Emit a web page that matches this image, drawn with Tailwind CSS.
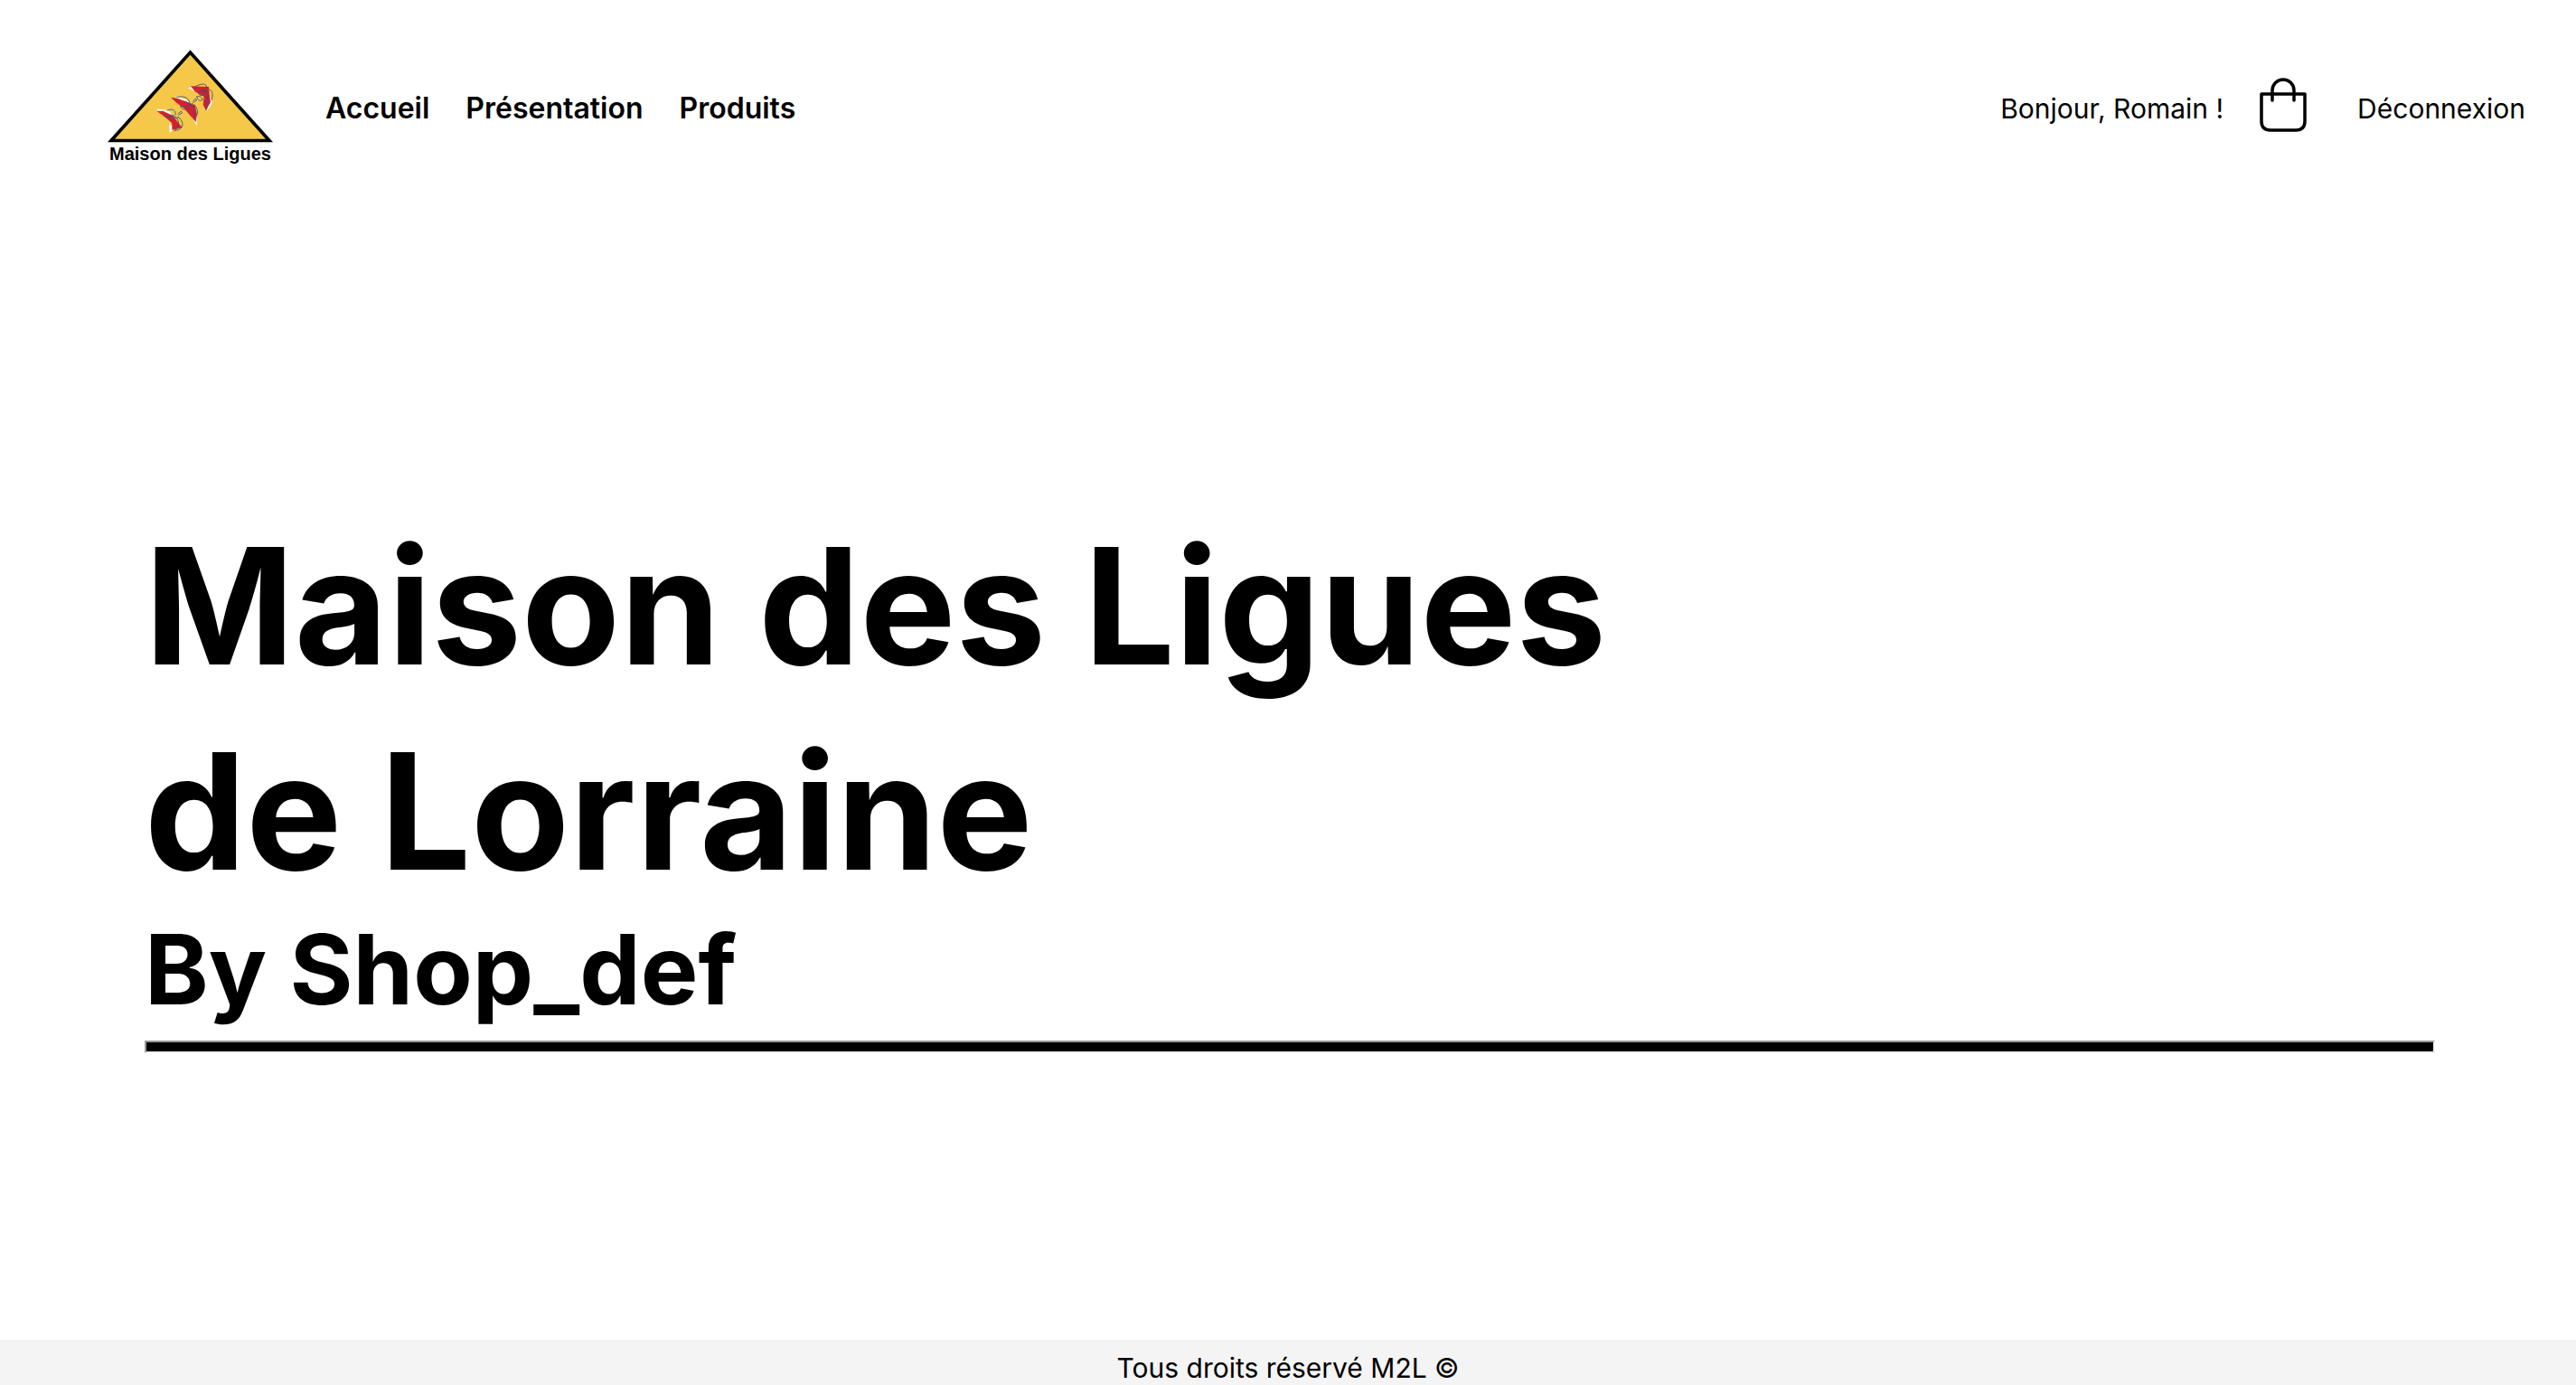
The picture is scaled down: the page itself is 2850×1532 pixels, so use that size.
<!DOCTYPE html>
<html lang="fr">
<head>
<meta charset="utf-8">
<meta name="viewport" content="width=device-width, initial-scale=1">
<title>Maison des Ligues</title>
<script src="https://cdn.jsdelivr.net/npm/@tailwindcss/browser@4"></script>
</head>
<body class="flex min-h-screen flex-col bg-white font-['Inter',sans-serif] text-[30px] leading-[40px] text-black">
<header class="flex items-center justify-between pt-10 pr-14 pl-[110px]">
  <div class="flex items-center gap-[46px]">
    <a href="#" aria-label="Maison des Ligues">
      <svg class="block h-[160px] w-[204px]" viewBox="110 40 204 160">
        <path d="M210.500 58L298 155.500H123z" fill="#f5c84a" stroke="#000" stroke-width="3.600"/>
        <g transform="translate(165 85) scale(.3333)" stroke-linecap="round">
          <path d="M24 106L62 111L84 131L70 135L40 122zM67 148L80 174L68 186zM88 64L124 76L140 92L110 90zM138 128L158 116L158 161zM128 37L152 32L164 54zM198 55L210 86L192 114z" fill="#fff"/>
          <path d="M26 114L46 113L80 130L92 146L110 169L76 176L76 154L52 133zM72 68L98 73L152 94L159 124L155 150L136 128L116 104L92 87zM138 31L198 33L200 58L204 84L189 112L179 93L182 66L152 49z" fill="#d3212f"/>
          <g fill="none" stroke="#34517c" stroke-width="2.500">
            <path d="M60 111Q88 100 88 126M96 132Q118 152 108 168Q98 180 84 178M66 130Q76 118 92 138T84 180M52 132L96 136M96 122L106 114L110 120L98 126"/>
            <path d="M92 67Q134 58 136 92M150 92Q168 114 158 128M104 98Q130 104 146 86M120 80L148 100L154 140M104 98Q108 112 126 108"/>
            <path d="M152 32Q192 12 192 38M200 42Q216 46 208 76M164 54Q168 42 190 48Q172 72 164 56M146 80L154 72L158 78L148 84M158 66Q172 60 178 76Q164 86 158 66M176 40L196 52L188 108"/>
          </g>
        </g>
        <text x="121" y="177" font-family="Liberation Sans, Arial, sans-serif" font-weight="700" font-size="20">Maison des Ligues</text>
      </svg>
    </a>
    <nav class="flex gap-10 text-[32px] font-semibold">
      <a href="#">Accueil</a>
      <a href="#">Présentation</a>
      <a href="#">Produits</a>
    </nav>
  </div>
  <div class="flex items-center gap-10">
    <span>Bonjour, Romain !</span>
    <button type="button" aria-label="Panier" class="mr-4 pb-2">
      <svg class="block h-[60px] w-[52px]" viewBox="0 0 52 60" fill="none" stroke="#000" stroke-width="3.500" stroke-linecap="round" stroke-linejoin="round"><path d="M2 18H50V48Q50 58 40 58H12Q2 58 2 48zM14 25V14A12 12 0 0 1 38 14V25"/></svg>
    </button>
    <a href="#">Déconnexion</a>
  </div>
</header>
<main class="flex grow flex-col justify-center pt-10 pr-[156px] pl-40">
  <h1 class="text-[178px] leading-[227px] font-bold">Maison des Ligues<br>de Lorraine</h1>
  <p class="text-[107px] leading-[122px] font-bold">By Shop_def</p>
  <hr class="mt-[18px] h-[14px] border-2 border-t-[#999] border-r-[#eee] border-b-[#eee] border-l-[#999] bg-black">
</main>
<footer class="bg-[#f4f4f4] pt-3 text-center leading-[38px]">Tous droits réservé M2L ©</footer>
</body>
</html>
